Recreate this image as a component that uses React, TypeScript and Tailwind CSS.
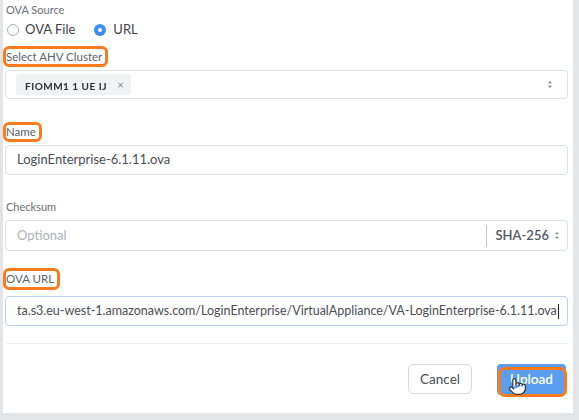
import { Pointer } from "lucide-react";

const font = { fontFamily: "Lato, 'Open Sans', sans-serif" };

function Mark({ children, className = "" }: { children: React.ReactNode; className?: string }) {
  return (
    <div
      className={`-ml-[2px] inline-flex w-fit items-center rounded-[6px] border-[3px] border-[#fb7a1c] pr-[3px] text-[11.5px] text-[#5d6168] ${className}`}
    >
      {children}
    </div>
  );
}

function UpDown({ className = "" }: { className?: string }) {
  return (
    <svg width="6" height="9" viewBox="0 0 6 9" className={className}>
      <path d="M1 3.2 L3 1 L5 3.2 Z" fill="currentColor" />
      <path d="M1 5.8 L3 8 L5 5.8 Z" fill="currentColor" />
    </svg>
  );
}

export default function App() {
  return (
    <div className="flex min-h-[420px] bg-[#e3e4e7] pb-[7px] pl-[3px] pr-[6px]" style={font}>
      <div className="flex min-w-0 flex-1 flex-col bg-white pb-[18px] pl-[2px] pr-[5px]">
        <div className="ml-[1px] pt-[3px] text-[11px] leading-[14px] text-[#6a6e75]">OVA Source</div>

        <div className="ml-[2px] mt-[6px] flex h-[14px] items-center text-[13px] text-[#3f4247]">
          <span className="h-[12px] w-[12px] rounded-full border border-[#a9adb3] bg-white" />
          <span className="ml-[6px]">OVA File</span>
          <span className="ml-[19px] flex h-[12px] w-[12px] items-center justify-center rounded-full bg-[#3f8ef0]">
            <span className="h-[4px] w-[4px] rounded-full bg-white" />
          </span>
          <span className="ml-[7px]">URL</span>
        </div>

        <Mark className="mt-[9px] h-[21px] leading-[15px]">Select AHV Cluster</Mark>

        <div className="mt-[3px] flex h-[29px] items-center rounded-[4px] border border-[#dfe0e3] pl-[10px] pr-[14px]">
          <div className="flex h-[21px] items-center rounded-[3px] bg-[#f1f2f4] pl-[9px] pr-[7px]">
            <span className="translate-y-[2px] text-[10px] font-bold tracking-[0.5px] text-[#2c2f33] blur-[0.5px]">
              FIOMM1 1 UE IJ
            </span>
            <span className="ml-[10px] text-[12px] leading-none text-[#8d9197]">×</span>
          </div>
          <UpDown className="ml-auto text-[#7d8187]" />
        </div>

        <Mark className="mt-[23px] h-[20px] leading-[14px]">Name</Mark>

        <div className="mt-[3px] flex h-[30px] items-center rounded-[4px] border border-[#dcdee1] px-[11px] text-[13px] text-[#4a4d52]">
          LoginEnterprise-6.1.11.ova
        </div>

        <div className="ml-[1px] mt-[25px] text-[11px] leading-[14px] text-[#6a6e75]">Checksum</div>

        <div className="mt-[6px] flex h-[31px] items-center rounded-[4px] border border-[#dcdee1] pl-[11px] text-[13px]">
          <span className="text-[#b0b3b8]">Optional</span>
          <span className="ml-auto h-[22px] w-px bg-[#c9cbcf]" />
          <span className="ml-[9px] font-semibold text-[#55585d]">SHA-256</span>
          <UpDown className="ml-[5px] mr-[7px] text-[#7d8187]" />
        </div>

        <Mark className="mt-[17px] h-[22px] leading-[16px]">OVA URL</Mark>

        <div className="mt-[6px] flex h-[30px] items-center overflow-hidden whitespace-nowrap rounded-[4px] border border-[#b9d3ee] pl-[11px] text-[12.5px] text-[#4a4d52]">
          ta.s3.eu-west-1.amazonaws.com/LoginEnterprise/VirtualAppliance/VA-LoginEnterprise-6.1.11.ova
          <span className="ml-px h-[15px] w-px shrink-0 bg-[#222]" />
        </div>

        <div className="ml-[1px] mt-[17px] h-px bg-[#eeeff1]" />

        <div className="mr-[2px] mt-[20px] flex h-[31px] justify-end gap-[25px]">
          <button className="h-[30px] w-[64px] rounded-[5px] border border-[#d8dadd] bg-white text-[13.5px] text-[#4a4d52]">
            Cancel
          </button>
          <button className="relative h-[31px] w-[69px] rounded-[4px] bg-[#5b9ef0] text-[13.5px] font-semibold text-white">
            Upload
            <span className="absolute -bottom-[2px] -right-[1px] left-[1px] top-[3px] rounded-[7px] border-[3px] border-[#fb7a1c]" />
            <Pointer
              className="absolute left-[11px] top-[13px] h-[19px] w-[19px] text-[#333]"
              fill="white"
              strokeWidth={1.5}
            />
          </button>
        </div>
      </div>
    </div>
  );
}
